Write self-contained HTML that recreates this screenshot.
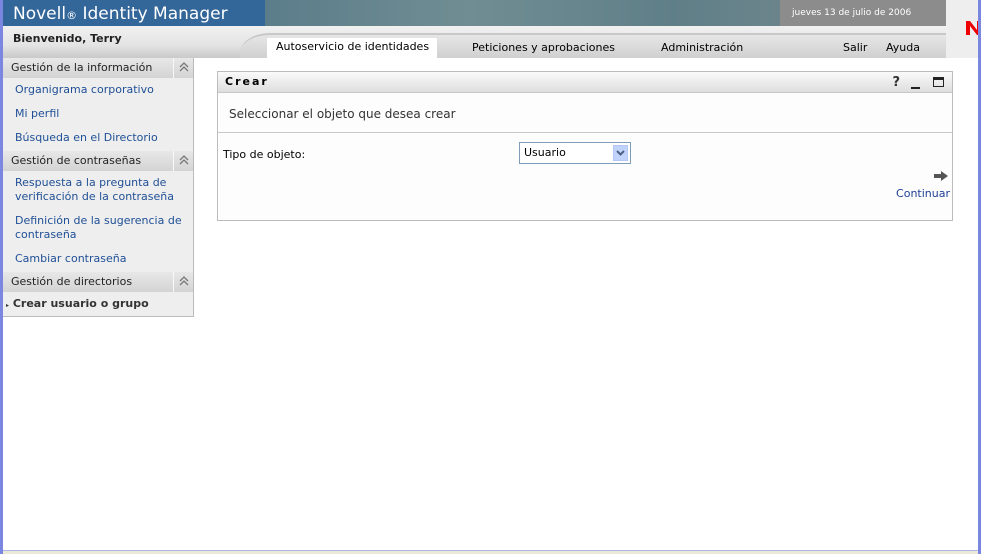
<!DOCTYPE html>
<html><head><meta charset="utf-8"><style>
*{margin:0;padding:0;box-sizing:border-box}
body{width:981px;height:554px;overflow:hidden;background:#fff;font-family:"DejaVu Sans","Liberation Sans",sans-serif;font-size:11px;color:#000;position:relative}
.a{position:absolute}
.lb{left:0;top:0;width:3px;height:554px;background:#7b86e0}
.rb{left:978px;top:0;width:3px;height:554px;background:#7b86e0}
.title{left:3px;top:0;width:262px;height:26px;background:#336699;color:#fff;font-size:17px;padding:4px 0 0 10px}
.tex{left:265px;top:0;width:681px;height:26px;background:linear-gradient(90deg,#5b7d8a,#708d93 30%,#5f7f88 60%,#7f8d90)}
.date{left:780px;top:0;width:166px;height:26px;background:#8c8c8c;color:#fff;font-size:9px;padding:8px 0 0 12px}
.rt{left:946px;top:0;width:32px;height:58px;background:#eeeeee;overflow:hidden}
.bar{left:3px;top:26px;width:943px;height:32px;background:linear-gradient(#f1f1f1,#e4e4e4 60%,#c9c9c9)}
.nav{left:240px;top:33px;width:706px;height:25px;background:linear-gradient(#e6e6e6,#d0d0d0);border-top:2px solid #c8c8c8;border-top-left-radius:30px 20px}
.tab{left:267px;top:38px;width:170px;height:20px;background:#fff;padding:2px 0 0 9px}
.side{left:3px;top:58px;width:191px;height:259px;background:#eeeeee;border-right:1px solid #bbb;border-bottom:1px solid #bbb}
.sh{position:absolute;left:0;width:190px;height:20px;background:linear-gradient(#e8e8e8,#d4d4d4);padding:3px 0 0 8px;color:#222}
.sh svg{position:absolute;right:0;top:0;border-left:1px solid #f8f8f8}
.lk{position:absolute;left:12px;color:#1f4f96;line-height:14px}
.panel{left:217px;top:71px;width:736px;height:150px;border:1px solid #bcbcbc;background:#fdfdfd}
.ph{height:21px;background:linear-gradient(#fafafa,#dedede);border-bottom:1px solid #c8c8c8;font-weight:bold;letter-spacing:2px;padding:3px 0 0 7px}
.sel{left:519px;top:142px;width:112px;height:22px;border:1px solid #7f9db9;background:#fff;padding:3px 0 0 4px}
.sel i{position:absolute;right:2px;top:2px;width:15px;height:16px;background:#c1d3fb;border:1px solid #b4c8f5}
</style></head><body>
<div class="a lb"></div><div class="a rb"></div>
<div class="a title">Novell<span style="font-size:11px">®</span> Identity Manager</div>
<div class="a tex"></div>
<div class="a date">jueves 13 de julio de 2006</div>
<div class="a rt"><svg class="a" style="left:19px;top:20px" width="20" height="16"><path d="M1 15V1h4l7 9V1h4v14h-4L5 6v9z" fill="#e00"/></svg></div>
<div class="a bar"></div>
<div class="a" style="left:13px;top:32px;font-weight:bold;color:#222">Bienvenido, Terry</div>
<div class="a nav"></div>
<div class="a tab">Autoservicio de identidades</div>
<div class="a" style="left:472px;top:41px">Peticiones y aprobaciones</div>
<div class="a" style="left:661px;top:41px">Administración</div>
<div class="a" style="left:843px;top:41px">Salir</div>
<div class="a" style="left:886px;top:41px">Ayuda</div>
<div class="a side">
<div class="sh" style="top:0">Gestión de la información<svg width="20" height="20"><path d="M6 9l4-4 4 4M6 13l4-4 4 4" stroke="#777" stroke-width="1.3" fill="none"/></svg></div>
<div class="lk" style="top:25px">Organigrama corporativo</div>
<div class="lk" style="top:49px">Mi perfil</div>
<div class="lk" style="top:73px">Búsqueda en el Directorio</div>
<div class="sh" style="top:93px">Gestión de contraseñas<svg width="20" height="20"><path d="M6 9l4-4 4 4M6 13l4-4 4 4" stroke="#777" stroke-width="1.3" fill="none"/></svg></div>
<div class="lk" style="top:118px">Respuesta a la pregunta de<br>verificación de la contraseña</div>
<div class="lk" style="top:156px">Definición de la sugerencia de<br>contraseña</div>
<div class="lk" style="top:194px">Cambiar contraseña</div>
<div class="sh" style="top:214px">Gestión de directorios<svg width="20" height="20"><path d="M6 9l4-4 4 4M6 13l4-4 4 4" stroke="#777" stroke-width="1.3" fill="none"/></svg></div>
<div class="lk" style="top:239px;left:3px;color:#333;font-weight:bold"><span style="font-size:6px">▸</span> Crear usuario o grupo</div>
</div>
<div class="a panel">
<div class="ph">Crear</div>
<div class="a" style="right:52px;top:3px;font-weight:bold;font-size:13px;color:#333">?</div>
<div class="a" style="right:32px;top:15px;width:9px;height:2px;background:#222"></div>
<div class="a" style="right:8px;top:5px;width:11px;height:10px;border:1px solid #222;border-top-width:3px"></div>
<div class="a" style="left:11px;top:35px;font-size:12px;color:#333">Seleccionar el objeto que desea crear</div>
<div class="a" style="left:0;top:60px;width:734px;height:1px;background:#c8c8c8"></div>
<div class="a" style="left:5px;top:76px">Tipo de objeto:</div>
<svg class="a" style="right:4px;top:99px" width="14" height="10"><path d="M0 3h7V0l7 5-7 5V7H0z" fill="#555"/></svg>
<div class="a" style="right:2px;top:115px;color:#1f3f96">Continuar</div>
</div>
<div class="a sel">Usuario<i><svg width="13" height="14"><path d="M3 5l3.5 3.5L10 5" stroke="#4d6185" stroke-width="2" fill="none"/></svg></i></div>
<div class="a" style="left:3px;top:550px;width:975px;height:4px;background:#ece9d8;border-top:1px solid #a9b8e6"></div>
</body></html>
